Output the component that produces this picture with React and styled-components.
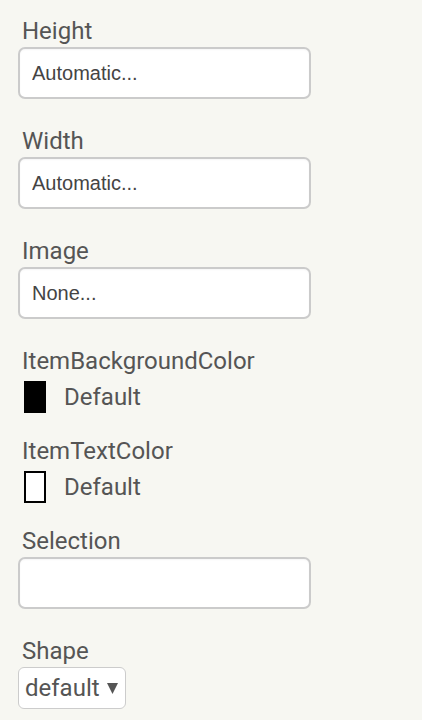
import React from "react";
import styled, { createGlobalStyle } from "styled-components";

const Global = createGlobalStyle`
  html, body { margin: 0; padding: 0; background: #f7f7f2; }
  body { font-family: Roboto, "Liberation Sans", Arial, sans-serif; }
`;

const Panel = styled.div`
  display: flex;
  flex-direction: column;
  padding: 17px 0 0 18px;
  width: 422px;
  height: 720px;
  box-sizing: border-box;
  overflow: hidden;
`;

const Group = styled.div`
  display: flex;
  flex-direction: column;
  align-items: flex-start;
  gap: ${(p) => p.$gap}px;
  margin-bottom: ${(p) => p.$mb}px;
`;

const Label = styled.div`
  font-family: Roboto, sans-serif;
  font-size: 24px;
  line-height: 28px;
  height: 28px;
  color: #555555;
  padding-left: 4px;
`;

const TextBox = styled.input`
  box-sizing: border-box;
  width: 293px;
  height: 52px;
  margin: 0;
  padding: 0 12px;
  border: 2px solid #cbcbcb;
  border-radius: 7px;
  background: #ffffff;
  font-family: "Liberation Sans", Arial, sans-serif;
  font-size: 20px;
  color: #444444;
  outline: none;
  box-shadow: inset 0 1px 2px rgba(0, 0, 0, 0.04);
`;

const ColorRow = styled.div`
  display: flex;
  align-items: center;
  gap: 18px;
  padding-left: 6px;
  height: 32px;
`;

const Swatch = styled.div`
  box-sizing: border-box;
  width: 22px;
  height: 32px;
  background: ${(p) => p.$fill};
  border: 2px solid #000000;
`;

const ColorName = styled.span`
  font-family: Roboto, sans-serif;
  font-size: 24px;
  line-height: 28px;
  color: #555555;
`;

const Dropdown = styled.button`
  box-sizing: border-box;
  height: 42px;
  margin: 0;
  padding: 0 7px 0 6px;
  border: 1px solid #cccccc;
  border-radius: 6px;
  background: #ffffff;
  display: flex;
  align-items: center;
  gap: 7px;
  font-family: Roboto, sans-serif;
  font-size: 24px;
  color: #555555;
  cursor: pointer;
`;

const Arrow = () => (
  <svg width="11" height="12" viewBox="0 0 11 12" aria-hidden="true">
    <polygon points="0,1 11,1 5.5,12" fill="#555555" />
  </svg>
);

export default function App() {
  return (
    <>
      <Global />
      <Panel>
        <Group $gap={2} $mb={28}>
          <Label>Height</Label>
          <TextBox readOnly value="Automatic..." />
        </Group>
        <Group $gap={2} $mb={28}>
          <Label>Width</Label>
          <TextBox readOnly value="Automatic..." />
        </Group>
        <Group $gap={2} $mb={28}>
          <Label>Image</Label>
          <TextBox readOnly value="None..." />
        </Group>
        <Group $gap={6} $mb={24}>
          <Label>ItemBackgroundColor</Label>
          <ColorRow>
            <Swatch $fill="#000000" />
            <ColorName>Default</ColorName>
          </ColorRow>
        </Group>
        <Group $gap={6} $mb={24}>
          <Label>ItemTextColor</Label>
          <ColorRow>
            <Swatch $fill="#ffffff" />
            <ColorName>Default</ColorName>
          </ColorRow>
        </Group>
        <Group $gap={2} $mb={28}>
          <Label>Selection</Label>
          <TextBox readOnly value="" />
        </Group>
        <Group $gap={2} $mb={0}>
          <Label>Shape</Label>
          <Dropdown type="button">
            default
            <Arrow />
          </Dropdown>
        </Group>
      </Panel>
    </>
  );
}
